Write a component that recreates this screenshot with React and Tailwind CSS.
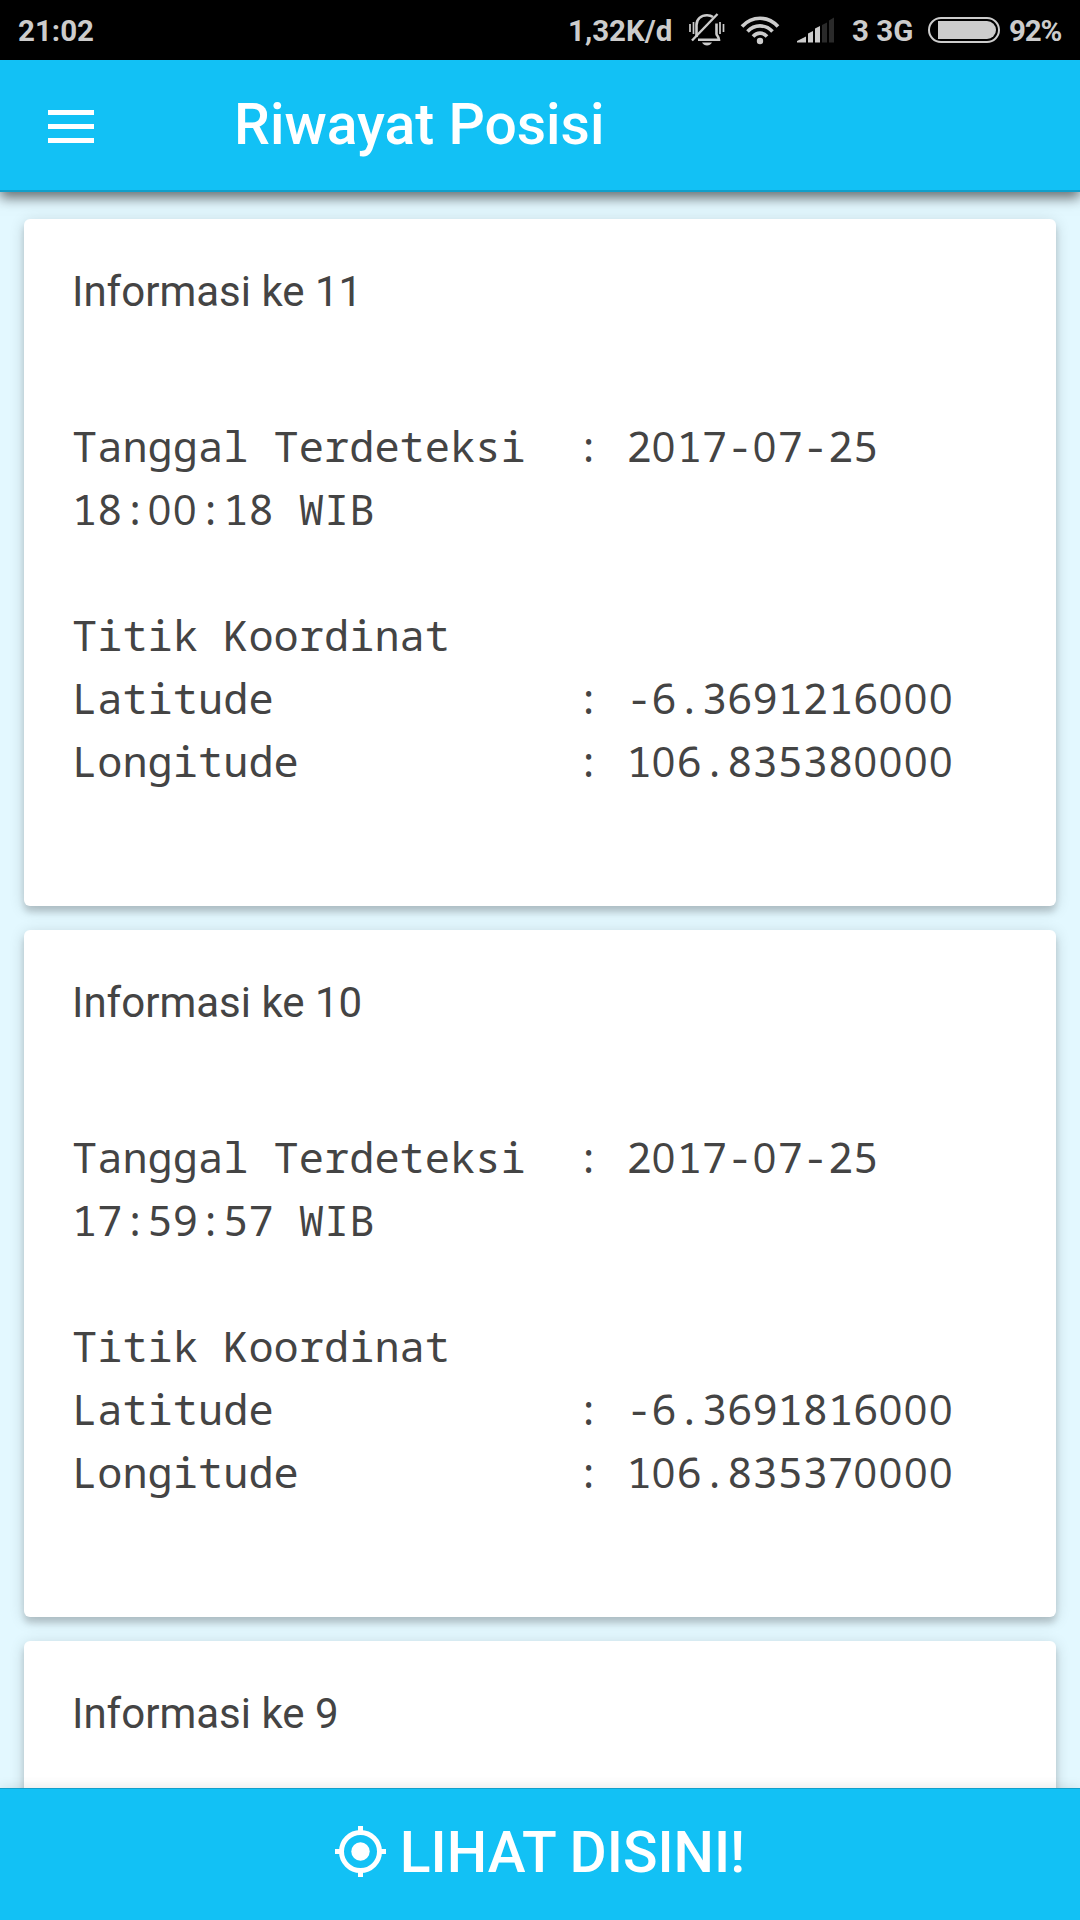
import React from "react";

const entries = [
  { id: 11, time: "18:00:18", lat: "-6.3691216000", lng: "106.835380000" },
  { id: 10, time: "17:59:57", lat: "-6.3691816000", lng: "106.835370000" },
  { id: 9 },
];

// Monospaced text with plain (unslashed) zeros.
function Mono({ children }) {
  return (
    <span className="block h-[63px] whitespace-pre">
      {children.split(/(0+)/).map((part, i) =>
        part.startsWith("0") ? (
          <span key={i} className="font-['Open_Sans'] tracking-[1.19px]">
            {part}
          </span>
        ) : (
          part
        )
      )}
    </span>
  );
}

function BellOff() {
  return (
    <svg className="h-[34px] w-[36px]" viewBox="0 0 36 34" fill="none" stroke="#cccccc">
      <path d="M7.500 24V12C7.500 6 12 2.200 18 2.200c2.500 0 4.500.6 6 1.800M27.500 10.500v10.500c0 1.500 2.500 2.500 2.500 5.800H9" strokeWidth="2.600" />
      <path d="M3 27.500L28.500 1" strokeWidth="2.400" />
      <path d="M1 11v8M4.500 9v12M31 9v12M34.500 11v8" strokeWidth="1.700" />
      <path d="M13 29.500h10c-1 2-3 3-5 3s-4-1-5-3z" fill="#cccccc" stroke="none" />
    </svg>
  );
}

function Wifi() {
  return (
    <svg className="h-[29px] w-[40px]" viewBox="0 0 40 29" fill="none" stroke="#cccccc" strokeWidth="3.600">
      <path d="M2 10.500C12 -.5 28 -.5 38 10.500M7.500 15.500c7-7.500 18-7.500 25 0M13 20.500c4-4.500 10-4.500 14 0" />
      <circle cx="20" cy="25" r="3.200" fill="#cccccc" stroke="none" />
    </svg>
  );
}

function Signal() {
  return (
    <svg className="h-[26px] w-[38px]" viewBox="0 0 38 26">
      <path d="M0 25.500v-1.500L9 19.500v6zM11 25.500v-9l5-2.500v11.500zM18 25.500V11.500l5-2.500v16.500z" fill="#cccccc" />
      <path d="M25 25.500V8l5-2.500v20zM32 25.500V3.500l5-3v25z" fill="#2a2a2a" />
    </svg>
  );
}

function Battery() {
  return (
    <div className="flex h-[26px] w-[72px] items-center justify-end rounded-full border-2 border-[#cccccc] pr-0.5">
      <div className="h-[18px] w-[58px] rounded-l-[1px] rounded-r-full bg-[#cccccc]" />
    </div>
  );
}

function StatusBar() {
  return (
    <div className="flex h-[60px] shrink-0 items-center bg-black pl-[18px] text-[29.5px] leading-[58px] font-bold text-[#cccccc]">
      <span className="w-[550px] pt-[2px]">21:02</span>
      <span className="w-[121px] pt-[2px]">1,32K/d</span>
      <BellOff />
      <span className="w-[15px]" />
      <Wifi />
      <span className="w-[17px]" />
      <Signal />
      <span className="ml-[17px] w-[76px] pt-[2px]">3 3G</span>
      <Battery />
      <span className="ml-[9px] pt-[2px] tracking-[-1.2px]">92%</span>
    </div>
  );
}

function Card({ entry }) {
  return (
    <section className="h-[687px] shrink-0 rounded-[6px] bg-white px-[48px] pt-[41px] text-[42px] leading-[63px] text-[#444444] shadow-[0_6px_6px_rgba(0,0,0,0.14),0_3px_15px_rgba(0,0,0,0.16)]">
      <h2>Informasi ke {entry.id}</h2>
      {entry.time && (
        <div className="mt-[91px] font-['Noto_Sans_Mono']">
          <Mono>{"Tanggal Terdeteksi  : 2017-07-25"}</Mono>
          <Mono>{entry.time + " WIB"}</Mono>
          <Mono> </Mono>
          <Mono>Titik Koordinat</Mono>
          <Mono>{"Latitude            : " + entry.lat}</Mono>
          <Mono>{"Longitude           : " + entry.lng}</Mono>
        </div>
      )}
    </section>
  );
}

function LocateIcon() {
  return (
    <svg className="mb-[3px] h-[51px] w-[51px]" viewBox="0 0 51 51" fill="none" stroke="#ffffff" strokeWidth="5">
      <circle cx="25.500" cy="25.500" r="19" />
      <circle cx="25.500" cy="25.500" r="9.200" fill="#ffffff" stroke="none" />
      <path d="M25.500 0v7M25.500 44v7M0 25.500h7M44 25.500h7" />
    </svg>
  );
}

export default function App() {
  return (
    <div className="flex h-[1920px] w-[1080px] flex-col overflow-hidden bg-[#e3f8ff] font-[Roboto,sans-serif]">
      <StatusBar />
      <header className="z-10 flex h-[132px] shrink-0 items-center border-b-2 border-[#109fcb] bg-[#12c1f5] pl-[48px] text-white shadow-[0_6px_12px_rgba(0,0,0,0.55)]">
        <div className="mt-[2px] flex w-[46px] flex-col gap-[9px]">
          <span className="h-[5px] bg-white" />
          <span className="h-[5px] bg-white" />
          <span className="h-[5px] bg-white" />
        </div>
        <h1 className="ml-[140px] text-[57px] leading-[80px] font-medium">Riwayat Posisi</h1>
      </header>
      <main className="flex min-h-0 flex-1 flex-col gap-6 overflow-hidden px-6 pt-[27px]">
        {entries.map((e) => (
          <Card key={e.id} entry={e} />
        ))}
      </main>
      <footer className="z-10 flex h-[132px] shrink-0 items-center justify-center gap-[14px] border-t border-[#109fcb] bg-[#12c1f5] pb-[4px] text-[57px] leading-[80px] font-medium text-white shadow-[0_0_12px_rgba(0,0,0,0.12)]">
        <LocateIcon />
        <span>LIHAT DISINI!</span>
      </footer>
    </div>
  );
}
